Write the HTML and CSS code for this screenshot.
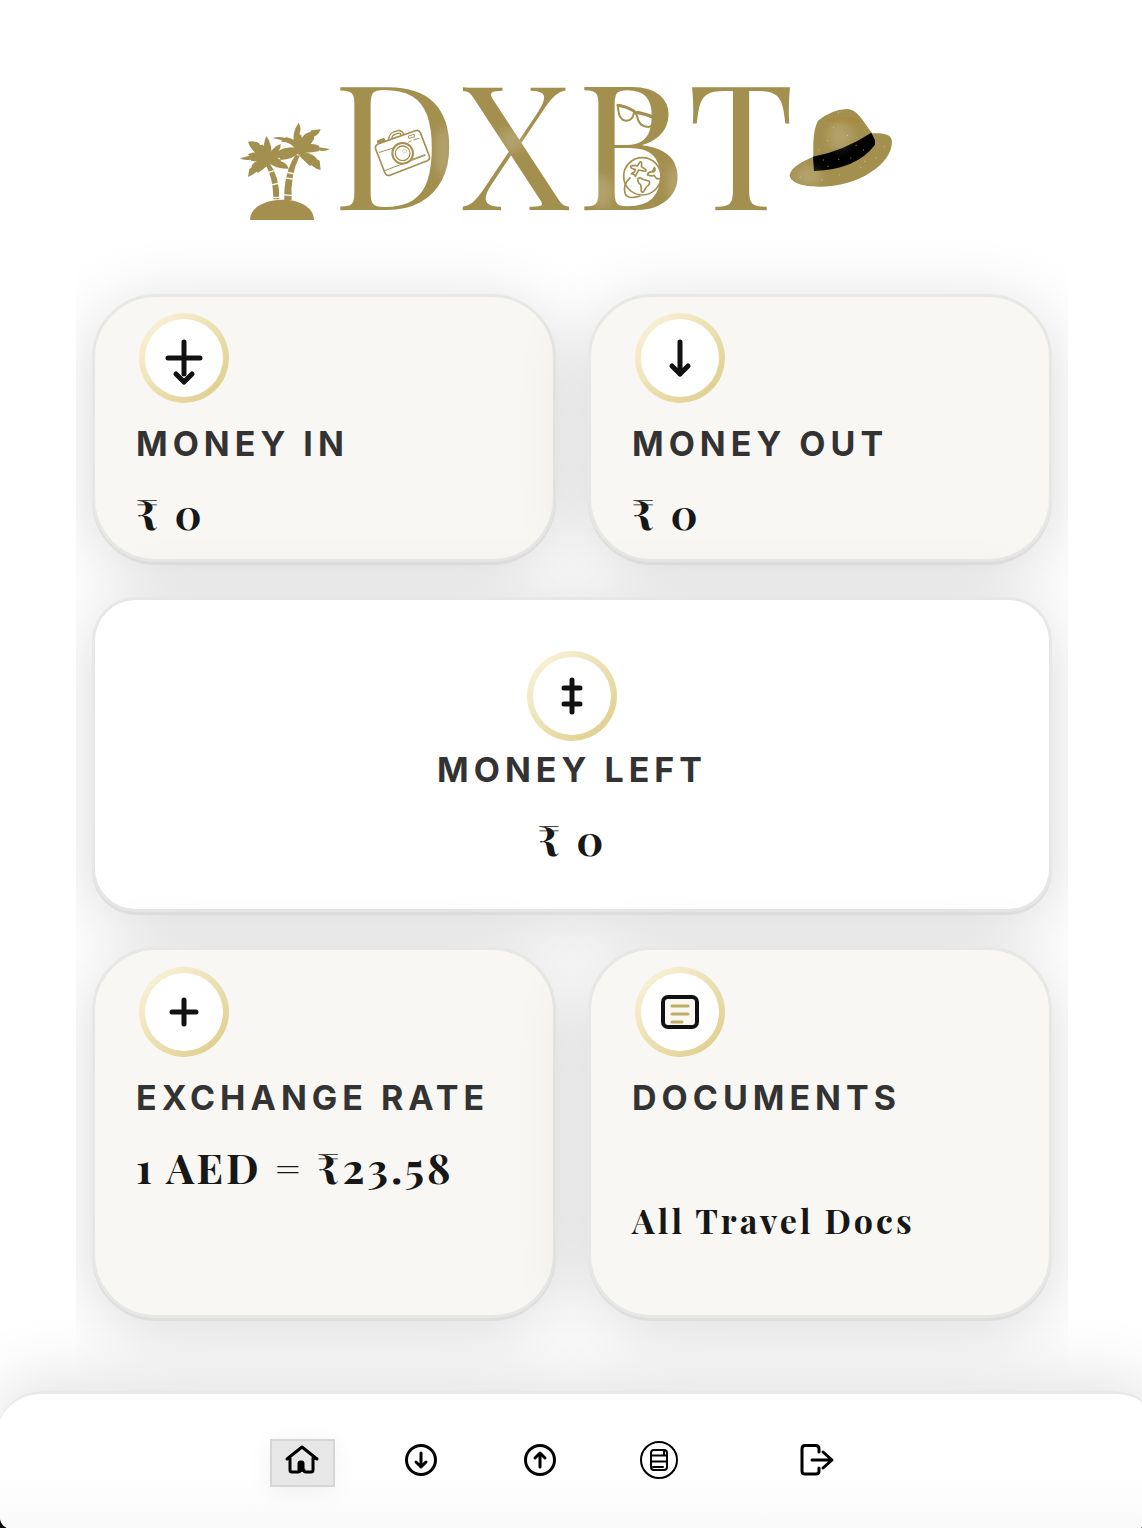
FILE: index.html
```html
<!DOCTYPE html>
<html lang="en">
<head>
  <meta charset="utf-8">
  <meta name="viewport" content="width=device-width, initial-scale=1">
  <title>DXBT</title>
  <link rel="stylesheet" href="styles.css">
</head>
<body>
  <div class="page">
    <header class="header">
      <svg class="logo" viewBox="231 0 680 256" role="img" aria-label="DXBT">
        <defs>
          <filter id="soft" x="-50%" y="-50%" width="200%" height="200%"><feGaussianBlur stdDeviation="5"/></filter>
        </defs>
        <text class="logo-text" y="210" x="333 460 577 687">DXBT</text>

        <!-- palm island -->
        <g transform="translate(230 70) scale(.3333)" class="gold-fill">
          <path d="M60 450C60 412 104 390 156 389S252 412 252 450Z"/>
          <path d="M107 284Q130 325 130 388L148 388Q149 320 118 278Z"/>
          <path d="M197 254Q160 310 163 390L185 390Q180 315 209 258Z"/>
          <path d="M100 264Q98 215 110 198Q130 230 123 264Z"/>
          <path d="M110 268Q65 250 54 215Q72 212 87 219L90 225L98 224Q118 245 118 262Z"/>
          <path d="M112 258Q82 238 54 253L58 257L30 265Q42 273 62 269L64 273Q92 276 114 274Z"/>
          <path d="M112 264Q66 272 64 293L58 297L54 321Q70 314 80 305L84 308Q114 290 120 274Z"/>
          <path d="M112 274Q122 230 152 222Q152 240 141 248L142 253L128 268Z"/>
          <path d="M104 270Q135 298 176 296Q170 278 152 274L153 270Q130 255 108 262Z"/>
          <path d="M194 238Q182 188 206 158Q216 176 208 192L214 196Q220 220 212 240Z"/>
          <path d="M206 246Q178 212 154 216L156 211L128 204Q146 198 166 204L168 201Q206 208 210 238Z"/>
          <path d="M202 240Q212 190 242 185L243 181L272 178Q266 196 252 200L252 206Q240 232 212 244Z"/>
          <path d="M206 234Q242 214 268 228L267 232L300 237Q284 246 267 241L266 244Q228 250 204 248Z"/>
          <path d="M204 242Q254 250 260 267L269 272L272 300Q254 296 245 286L239 287Q216 268 202 250Z"/>
          <path d="M208 232Q160 230 142 245L120 260Q134 266 148 263L152 270Q188 270 212 244Z"/>
          <path class="cut" d="M114 308l18-6M122 345l24-5M124 383l28-1M168 306l26 6M160 323l28 4M158 374l30 3"/>
        </g>

        <!-- camera -->
        <g transform="translate(230 70) scale(.3333)" class="gold-line">
          <path stroke-width="5" d="M446 221L556 182Q567 178 571 188L598 258Q601 268 592 272L482 315Q470 320 465 309L437 237Q434 226 446 221Z"/>
          <path stroke-width="4" d="M476 208Q478 191 490 186L504 182Q514 179 521 191M486 204Q486 196 494 193L504 190Q512 188 513 195"/>
          <path stroke-width="3" class="gold-fill" d="M443 212L462 205L465 213L445 220Z"/>
          <circle cx="518" cy="250" r="31" stroke-width="6"/>
          <circle cx="518" cy="250" r="22" stroke-width="4"/>
          <circle cx="524" cy="243" r="6" stroke-width="1"/>
          <path stroke-width="3" d="M448 247L490 234M464 302L586 256M546 268L584 254M536 198L552 193L554 200L538 205ZM536 216l8-3M552 210l14-5"/>
        </g>

        <!-- sunglasses and globe -->
        <g transform="translate(560 70) scale(.3333)" class="gold-line">
          <path stroke-width="6" d="M174 104Q200 108 222 123Q228 130 236 126Q262 132 285 141L284 151Q278 171 264 171Q236 170 231 138Q230 130 222 128Q218 152 200 152Q174 152 174 104Z"/>
          <path stroke-width="8" d="M173 106Q198 109 222 123M230 128Q258 132 284 145"/>
          <circle cx="247" cy="319" r="56" stroke-width="5"/>
          <path stroke-width="5" d="M210 324Q188 344 195 370Q202 390 240 378M212 289Q224 284 232 288L240 276Q246 274 245 284L244 290L258 299Q258 306 250 303L236 300L230 311L226 319L221 313L214 311L222 307L227 299L214 295ZM234 326Q240 320 248 328L268 334Q272 342 260 350L250 366Q242 368 244 356L242 344Q232 338 234 326ZM262 314Q266 305 276 306L284 292M262 314Q276 320 282 316L290 326L299 326M279 306Q286 306 285 296"/>
        </g>

        <!-- hat -->
        <g transform="translate(560 70) scale(.3333)">
          <path class="gold-fill" d="M689 315C694 291 724 276 760 260C760 222 758 184 774 152Q812 120 860 117C882 117 896 134 908 150L936 190C970 188 996 192 996 215C996 280 900 350 776 350C730 350 690 338 689 315Z"/>
          <path class="crease" d="M794 151Q830 138 872 143Q900 148 910 156Q840 168 794 151Z"/>
          <path class="band" d="M759 260Q850 243 934 188L945 210V224Q890 298 762 303Z"/>
          <path class="speck" d="M835 129h1M820 172h1M862 197h1M802 212h1M776 240h1M790 270h1M836 268h1M872 264h1M910 240h1M948 264h1M902 292h1M838 315h1M785 330h1M720 322h1M973 230h1M888 226h1M914 274h1M804 289h1"/>
        </g>

        <g class="sheen" filter="url(#soft)">
          <ellipse cx="444" cy="152" rx="9" ry="26"/>
          <ellipse cx="512" cy="140" rx="13" ry="12"/>
          <ellipse cx="602" cy="192" rx="12" ry="16"/>
          <ellipse cx="676" cy="184" rx="9" ry="20"/>
          <ellipse cx="840" cy="136" rx="12" ry="14"/>
          <ellipse cx="808" cy="176" rx="14" ry="10"/>
        </g>
      </svg>
    </header>

    <main class="cards">
      <section class="card">
        <span class="badge">
          <svg viewBox="0 0 78 78" aria-hidden="true"><path d="M39 23V55M23 39H55M31 55L39 63L47 55"/></svg>
        </span>
        <h2 class="title">MONEY IN</h2>
        <p class="amount">₹ 0</p>
      </section>

      <section class="card">
        <span class="badge">
          <svg viewBox="0 0 78 78" aria-hidden="true"><path d="M39 23V55M31 47L39 55L47 47"/></svg>
        </span>
        <h2 class="title">MONEY OUT</h2>
        <p class="amount">₹ 0</p>
      </section>

      <section class="card card-wide">
        <span class="badge">
          <svg viewBox="0 0 78 78" aria-hidden="true"><path d="M39 23V55M31 31H47M31 47H47"/></svg>
        </span>
        <h2 class="title">MONEY LEFT</h2>
        <p class="amount">₹ 0</p>
      </section>

      <section class="card card-tall">
        <span class="badge">
          <svg viewBox="0 0 78 78" aria-hidden="true"><path d="M39 27V51M27 39H51"/></svg>
        </span>
        <h2 class="title">EXCHANGE RATE</h2>
        <p class="amount">1 AED = ₹23.58</p>
      </section>

      <section class="card card-tall">
        <span class="badge">
          <svg viewBox="0 0 78 78" aria-hidden="true">
            <rect x="22" y="24" width="34" height="30" rx="5"/>
            <path class="lines" d="M31 33H47M31 41H47M31 49H41"/>
          </svg>
        </span>
        <h2 class="title">DOCUMENTS</h2>
        <p class="note">All Travel Docs</p>
      </section>
    </main>

    <nav class="nav" aria-label="Main">
      <button class="nav-item active" type="button" aria-label="Home">
        <svg viewBox="0 0 38 38" aria-hidden="true"><path d="M4 18L19 6L34 18M7 17V29Q7 31 9 31H15Q17 31 17 29M21 29Q21 31 23 31H28Q30 31 30 29V17"/><path class="door" d="M15 30V22Q15 20 17 20H19Q21 20 21 22V30Z"/></svg>
      </button>
      <button class="nav-item" type="button" aria-label="Money in">
        <svg viewBox="0 0 38 38" aria-hidden="true"><circle cx="19" cy="19" r="14.500"/><path d="M19 12V26M14 21L19 26L24 21"/></svg>
      </button>
      <button class="nav-item" type="button" aria-label="Money out">
        <svg viewBox="0 0 38 38" aria-hidden="true"><circle cx="19" cy="19" r="14.500"/><path d="M19 26V12M14 17L19 12L24 17"/></svg>
      </button>
      <button class="nav-item" type="button" aria-label="Documents">
        <svg class="thin" viewBox="0 0 38 38" aria-hidden="true"><circle cx="19" cy="19" r="18"/><rect x="11" y="9" width="16" height="20" rx="3"/><path d="M11 14.500H27M11 20.500H27M13 26H23M24 10V14"/></svg>
      </button>
      <button class="nav-item logout" type="button" aria-label="Log out">
        <svg viewBox="0 0 38 38" aria-hidden="true"><path d="M22 11V8Q22 4.500 18.500 4.500H8Q5 4.500 5 8V30Q5 33 8 33H18.500Q22 33 22 30V27M15 19H35M26 11L35 19L26 27"/></svg>
      </button>
    </nav>
  </div>
</body>
</html>
```
FILE: styles.css
```css
:root {
  --gold: #a38f4e;
  --ink: #111;
  --line: #e7e7e6;
}

* {
  box-sizing: border-box;
}

html {
  background: #000;
}

body {
  margin: 0;
  font-family: Inter, "Liberation Sans", sans-serif;
  color: var(--ink);
}

.page {
  display: flex;
  flex-direction: column;
  min-height: 100vh;
  background: #fff;
  border-radius: 0 0 4px 12px;
  overflow: hidden;
}

.header {
  display: flex;
  justify-content: center;
  padding: 0 16px;
}

.logo {
  display: block;
  width: 100%;
  max-width: 680px;
}

.logo-text {
  font-family: "Playfair Display", "Liberation Serif", serif;
  font-size: 174px;
  fill: var(--gold);
}

.gold-fill {
  fill: var(--gold);
}

.gold-line {
  fill: none;
  stroke: var(--gold);
  stroke-linecap: round;
  stroke-linejoin: round;
}

.cut {
  fill: none;
  stroke: #fff;
  stroke-width: 4;
}

.crease {
  fill: #a68a3e;
}

.band {
  fill: #000;
}

.speck {
  fill: none;
  stroke: #ddd3ae;
  stroke-width: 2;
  stroke-linecap: round;
}

.sheen {
  fill: #fff;
  opacity: 0.16;
}

.cards {
  display: grid;
  grid-template-columns: 1fr 1fr;
  gap: 35px 32px;
  margin: -26px 74px 0 76px;
  padding: 64px 16px 73px;
  overflow: hidden;
}

.card {
  display: flex;
  flex-direction: column;
  align-items: flex-start;
  padding: 16px 41px 18px;
  background: #f8f7f3;
  border: 3px solid var(--line);
  border-radius: 64px;
  box-shadow: 0 3px 0 #dfdfdf, 0 12px 72px rgba(0, 0, 0, 0.15);
}

.card-wide {
  grid-column: 1 / -1;
  align-items: center;
  padding: 51px 41px 42px;
  background: #fff;
  border-radius: 44px;
}

.card-tall {
  min-height: 371px;
  padding-top: 17px;
}

.badge {
  display: block;
  width: 90px;
  height: 90px;
  margin: 0 3px;
  padding: 6px;
  border-radius: 50%;
  background: linear-gradient(135deg, #fbf6e0, #dccb85);
}

.badge svg {
  display: block;
  width: 78px;
  height: 78px;
  border-radius: 50%;
  background: #fff;
  fill: none;
  stroke: var(--ink);
  stroke-width: 5;
  stroke-linecap: round;
  stroke-linejoin: round;
}

.badge .lines {
  stroke: #bfae60;
  stroke-width: 3;
}

.badge rect {
  fill: #f8f7f3;
  stroke-width: 4;
}

.title {
  margin: 19px 0 0;
  font-size: 34px;
  font-weight: 700;
  line-height: 44px;
  letter-spacing: 5px;
  color: #333;
}

.card-wide .title {
  margin-top: 7px;
}

.amount,
.note {
  margin: 19px 0 0;
  font-family: "Playfair Display", "Liberation Serif", serif;
  font-size: 42px;
  font-weight: 700;
  line-height: 56px;
  letter-spacing: 3px;
  color: #171717;
}

.note {
  margin-top: 72px;
  font-size: 34px;
}

.nav {
  display: flex;
  justify-content: center;
  align-items: flex-start;
  gap: 54px;
  min-height: 138px;
  margin: auto -18px 0 -3px;
  padding: 45px 39px 40px 0;
  background: linear-gradient(#fff 60%, #f9f9f9);
  border-top: 3px solid #e9e9e9;
  border-radius: 44px 44px 0 0;
  box-shadow: 0 -8px 72px rgba(0, 0, 0, 0.13);
}

.nav-item {
  display: flex;
  justify-content: center;
  align-items: flex-start;
  width: 65px;
  height: 48px;
  padding: 0;
  background: none;
  border: 2px solid transparent;
  color: #000;
  cursor: pointer;
}

.nav-item.active {
  background: #e7e7e7;
  border-color: #d6d6d6;
  box-shadow: 0 4px 24px rgba(0, 0, 0, 0.06);
}

.nav-item.logout {
  margin-left: 38px;
}

.nav-item svg {
  width: 38px;
  height: 38px;
  fill: none;
  stroke: currentColor;
  stroke-width: 3;
  stroke-linecap: round;
  stroke-linejoin: round;
}

.nav-item .thin {
  stroke-width: 2;
}

.nav-item .door {
  fill: currentColor;
  stroke-width: 1;
}
```
